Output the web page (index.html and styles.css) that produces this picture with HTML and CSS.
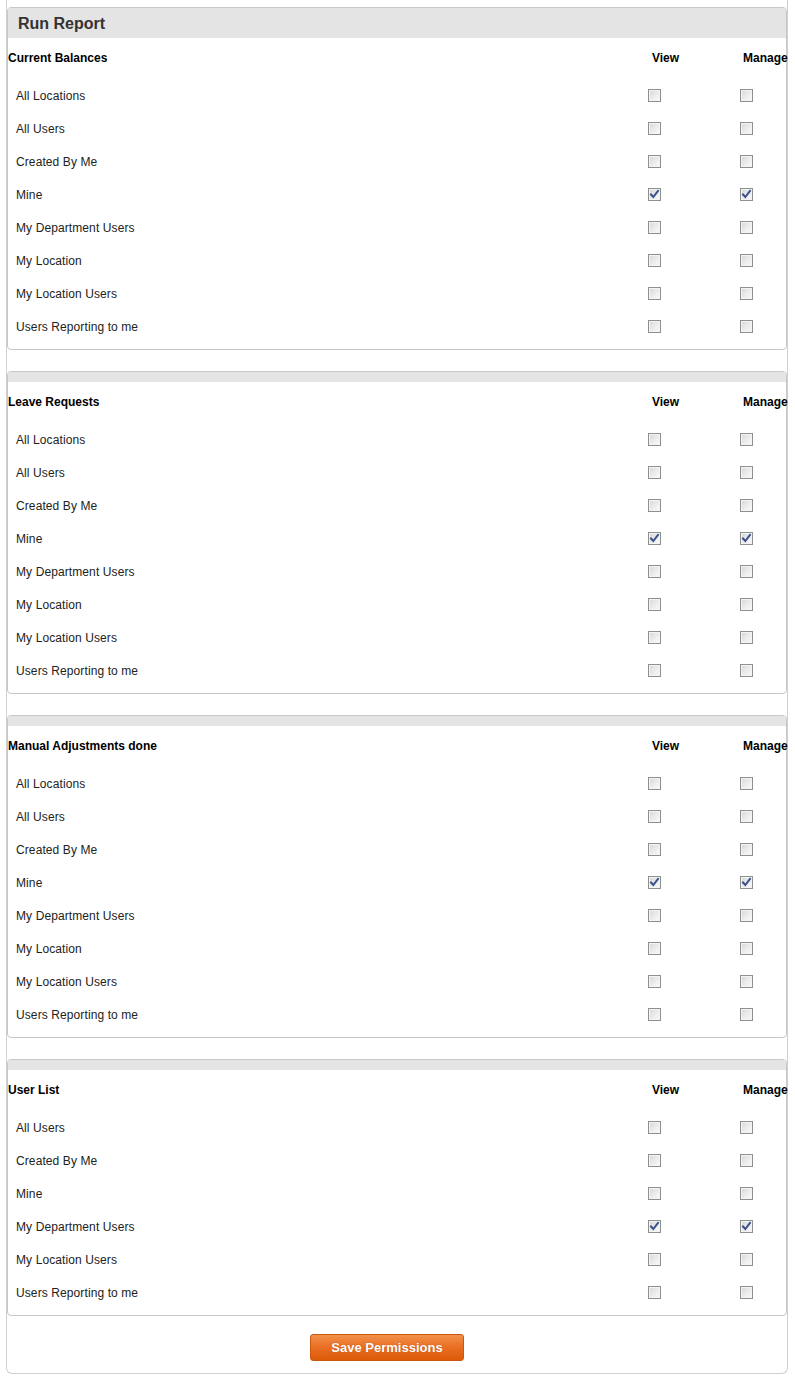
FILE: index.html
```html
<!DOCTYPE html>
<html>
<head>
<meta charset="utf-8">
<link rel="stylesheet" href="styles.css">
</head>
<body>
<div class="outer">
  <div class="section">
    <div class="head head-title">Run Report</div>
    <div class="grid">
      <div class="cap">Current Balances</div><div class="cap cv">View</div><div class="cap cm">Manage</div>
      <div class="lbl">All Locations</div><div class="cb v"><span class="box"></span></div><div class="cb m"><span class="box"></span></div>
      <div class="lbl">All Users</div><div class="cb v"><span class="box"></span></div><div class="cb m"><span class="box"></span></div>
      <div class="lbl">Created By Me</div><div class="cb v"><span class="box"></span></div><div class="cb m"><span class="box"></span></div>
      <div class="lbl">Mine</div><div class="cb v"><span class="box on"><svg viewBox="0 0 11 11"><path d="M2 5.5 L4.3 8 L9 2" /></svg></span></div><div class="cb m"><span class="box on"><svg viewBox="0 0 11 11"><path d="M2 5.5 L4.3 8 L9 2" /></svg></span></div>
      <div class="lbl">My Department Users</div><div class="cb v"><span class="box"></span></div><div class="cb m"><span class="box"></span></div>
      <div class="lbl">My Location</div><div class="cb v"><span class="box"></span></div><div class="cb m"><span class="box"></span></div>
      <div class="lbl">My Location Users</div><div class="cb v"><span class="box"></span></div><div class="cb m"><span class="box"></span></div>
      <div class="lbl">Users Reporting to me</div><div class="cb v"><span class="box"></span></div><div class="cb m"><span class="box"></span></div>
    </div>
  </div>

  <div class="section">
    <div class="head"></div>
    <div class="grid">
      <div class="cap">Leave Requests</div><div class="cap cv">View</div><div class="cap cm">Manage</div>
      <div class="lbl">All Locations</div><div class="cb v"><span class="box"></span></div><div class="cb m"><span class="box"></span></div>
      <div class="lbl">All Users</div><div class="cb v"><span class="box"></span></div><div class="cb m"><span class="box"></span></div>
      <div class="lbl">Created By Me</div><div class="cb v"><span class="box"></span></div><div class="cb m"><span class="box"></span></div>
      <div class="lbl">Mine</div><div class="cb v"><span class="box on"><svg viewBox="0 0 11 11"><path d="M2 5.5 L4.3 8 L9 2" /></svg></span></div><div class="cb m"><span class="box on"><svg viewBox="0 0 11 11"><path d="M2 5.5 L4.3 8 L9 2" /></svg></span></div>
      <div class="lbl">My Department Users</div><div class="cb v"><span class="box"></span></div><div class="cb m"><span class="box"></span></div>
      <div class="lbl">My Location</div><div class="cb v"><span class="box"></span></div><div class="cb m"><span class="box"></span></div>
      <div class="lbl">My Location Users</div><div class="cb v"><span class="box"></span></div><div class="cb m"><span class="box"></span></div>
      <div class="lbl">Users Reporting to me</div><div class="cb v"><span class="box"></span></div><div class="cb m"><span class="box"></span></div>
    </div>
  </div>

  <div class="section">
    <div class="head"></div>
    <div class="grid">
      <div class="cap">Manual Adjustments done</div><div class="cap cv">View</div><div class="cap cm">Manage</div>
      <div class="lbl">All Locations</div><div class="cb v"><span class="box"></span></div><div class="cb m"><span class="box"></span></div>
      <div class="lbl">All Users</div><div class="cb v"><span class="box"></span></div><div class="cb m"><span class="box"></span></div>
      <div class="lbl">Created By Me</div><div class="cb v"><span class="box"></span></div><div class="cb m"><span class="box"></span></div>
      <div class="lbl">Mine</div><div class="cb v"><span class="box on"><svg viewBox="0 0 11 11"><path d="M2 5.5 L4.3 8 L9 2" /></svg></span></div><div class="cb m"><span class="box on"><svg viewBox="0 0 11 11"><path d="M2 5.5 L4.3 8 L9 2" /></svg></span></div>
      <div class="lbl">My Department Users</div><div class="cb v"><span class="box"></span></div><div class="cb m"><span class="box"></span></div>
      <div class="lbl">My Location</div><div class="cb v"><span class="box"></span></div><div class="cb m"><span class="box"></span></div>
      <div class="lbl">My Location Users</div><div class="cb v"><span class="box"></span></div><div class="cb m"><span class="box"></span></div>
      <div class="lbl">Users Reporting to me</div><div class="cb v"><span class="box"></span></div><div class="cb m"><span class="box"></span></div>
    </div>
  </div>

  <div class="section section-last">
    <div class="head"></div>
    <div class="grid">
      <div class="cap">User List</div><div class="cap cv">View</div><div class="cap cm">Manage</div>
      <div class="lbl">All Users</div><div class="cb v"><span class="box"></span></div><div class="cb m"><span class="box"></span></div>
      <div class="lbl">Created By Me</div><div class="cb v"><span class="box"></span></div><div class="cb m"><span class="box"></span></div>
      <div class="lbl">Mine</div><div class="cb v"><span class="box"></span></div><div class="cb m"><span class="box"></span></div>
      <div class="lbl">My Department Users</div><div class="cb v"><span class="box on"><svg viewBox="0 0 11 11"><path d="M2 5.5 L4.3 8 L9 2" /></svg></span></div><div class="cb m"><span class="box on"><svg viewBox="0 0 11 11"><path d="M2 5.5 L4.3 8 L9 2" /></svg></span></div>
      <div class="lbl">My Location Users</div><div class="cb v"><span class="box"></span></div><div class="cb m"><span class="box"></span></div>
      <div class="lbl">Users Reporting to me</div><div class="cb v"><span class="box"></span></div><div class="cb m"><span class="box"></span></div>
    </div>
  </div>

  <div class="actions">
    <button class="save" type="button">Save Permissions</button>
  </div>
</div>
</body>
</html>
```

FILE: styles.css
```css
html, body {
  margin: 0;
  padding: 0;
  background: #fff;
}
body {
  font-family: "Liberation Sans", Arial, sans-serif;
  font-size: 12px;
  color: #222;
}
.outer {
  margin-left: 6px;
  width: 780px;
  padding-top: 7px;
  padding-bottom: 12px;
  border: 1px solid #cfcfcf;
  border-top: none;
  border-radius: 0 0 6px 6px;
}
.section {
  border: 1px solid #c8c8c8;
  border-radius: 4px;
  margin-bottom: 21px;
  padding-bottom: 6px;
}
.section-last {
  margin-bottom: 18px;
}
.head {
  height: 10px;
  background: #e4e4e4;
  border-radius: 3px 3px 0 0;
}
.head-title {
  height: 30px;
  line-height: 31px;
  padding-left: 10px;
  font-size: 16px;
  font-weight: bold;
  color: #333;
}
.grid {
  display: grid;
  grid-template-columns: 637px 92px 49px;
  grid-template-rows: 41px;
  grid-auto-rows: 33px;
}
.grid .cap {
  line-height: 41px;
  font-weight: bold;
  color: #000;
  white-space: nowrap;
}
.cv { padding-left: 7px; }
.cm { padding-left: 6px; }
.lbl {
  padding-left: 8px;
  line-height: 35px;
  color: #222;
  letter-spacing: 0.1px;
  white-space: nowrap;
}
.cb {
  display: flex;
  align-items: center;
  padding-left: 3px;
}
.box {
  position: relative;
  display: block;
  width: 11px;
  height: 11px;
  border: 1px solid #8e8f8f;
  background: linear-gradient(135deg, #d6d6d6 0%, #e9e9e9 45%, #fbfbfb 100%);
  box-shadow: inset 0 0 0 1px #f4f4f4;
}
.box svg {
  position: absolute;
  left: 0;
  top: 0;
  width: 11px;
  height: 11px;
}
.box svg path {
  fill: none;
  stroke: #3b4f8c;
  stroke-width: 2;
  stroke-linecap: square;
}
.actions {
  display: flex;
  justify-content: flex-start;
  padding-left: 303px;
}
.save {
  width: 154px;
  height: 27px;
  padding: 0;
  border: 1px solid #c9570f;
  border-radius: 3px;
  background: linear-gradient(to bottom, #f29149 0%, #e96d22 50%, #dc5a08 100%);
  color: #fff;
  font-family: "Liberation Sans", Arial, sans-serif;
  font-size: 13px;
  font-weight: bold;
  text-shadow: 0 0 1px #b04a0a;
  cursor: pointer;
}
```
